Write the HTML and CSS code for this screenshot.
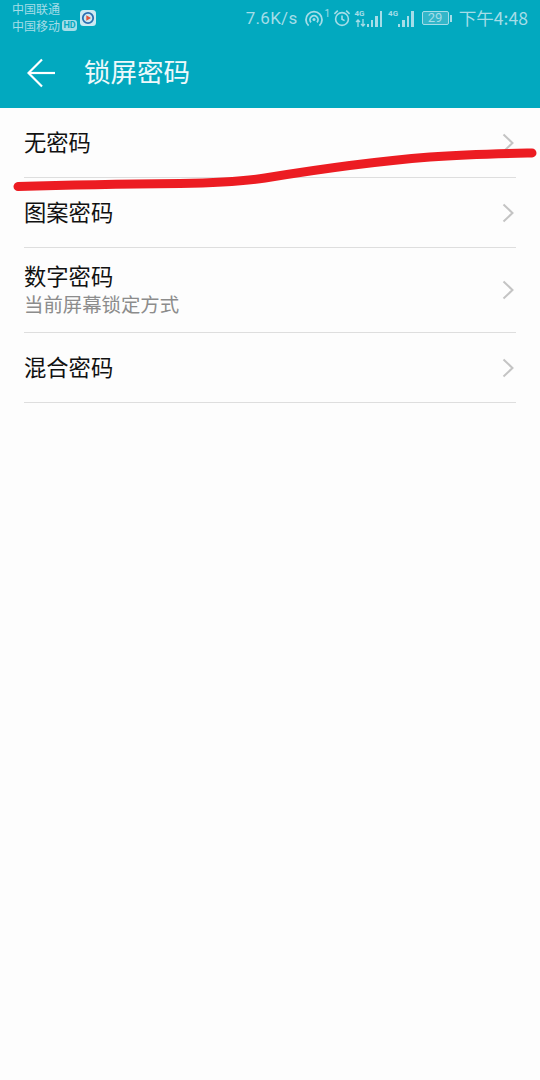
FILE: index.html
```html
<!DOCTYPE html>
<html lang="zh">
<head>
<meta charset="utf-8">
<title>锁屏密码</title>
<link rel="stylesheet" href="styles.css">
</head>
<body>
<div class="screen">
  <header class="header">
    <div class="status">
      <div class="status-left">
        <div class="carriers">
          <span>中国联通</span>
          <span class="carrier-2">中国移动<b class="hd">HD</b></span>
        </div>
        <svg class="app-icon" viewBox="0 0 16 16" width="16" height="16">
          <rect x="0" y="0" width="16" height="16" rx="3.5" fill="#cfeaf2"/>
          <circle cx="8" cy="8" r="5.2" fill="none" stroke="#2b6fb0" stroke-width="1.8"/>
          <path d="M6.3 5.2 11 8l-4.7 2.8z" fill="#e2543c"/>
        </svg>
      </div>
      <div class="status-right">
        <span class="speed">7.6K/s</span>
        <span class="hotspot-wrap">
          <svg viewBox="0 0 18 17" width="18" height="17" fill="none" stroke="#a5dde8" stroke-width="1.8">
            <path d="M3.6 15.600A8 8 0 1 1 14.400 15.600"/>
            <path d="M6 12.400A4 4 0 1 1 12 12.400"/>
            <circle cx="9" cy="9.600" r="1.500" fill="#a5dde8" stroke="none"/>
          </svg>
          <sup class="one">1</sup>
        </span>
        <svg class="alarm" viewBox="0 0 18 18" width="18" height="18" fill="none" stroke="#a5dde8" stroke-width="1.6">
          <circle cx="9" cy="10" r="6.400"/>
          <path d="M9 6.400V10.200L11.600 11.600"/>
          <path d="M1.400 4.800 4.800 1.600M16.600 4.800 13.200 1.600"/>
        </svg>
        <span class="signal">
          <span class="net net-wide"><span>4G</span>
            <svg class="arrows" viewBox="0 0 11 8" width="11" height="8" fill="none" stroke="#a5dde8" stroke-width="1.300">
              <path d="M3 8V1M1 3 3 1 5 3M8 0V7M6 5 8 7 10 5"/>
            </svg>
          </span>
          <span class="bars"><i class="b1"></i><i class="b2"></i><i class="b3"></i><i class="b4"></i></span>
        </span>
        <span class="signal signal-last">
          <span class="net"><span>4G</span></span>
          <span class="bars"><i class="b1"></i><i class="b2"></i><i class="b3"></i><i class="b4"></i></span>
        </span>
        <span class="battery"><span class="battery-body">29</span><span class="battery-cap"></span></span>
        <span class="clock">下午4:48</span>
      </div>
    </div>
    <div class="toolbar">
      <svg class="back" viewBox="0 0 28 30" width="28" height="30" fill="none" stroke="#fff" stroke-width="2.200">
        <path d="M28 15H2"/>
        <path d="M15 1.500 1.500 15 15 28.500"/>
      </svg>
      <h1 class="title">锁屏密码</h1>
    </div>
  </header>

  <main class="list">
    <div class="row">
      <span class="label">无密码</span>
      <svg class="chev" viewBox="0 0 12 20" width="12" height="20"><path d="M1.500 1.500 10.500 10 1.500 18.500"/></svg>
    </div>
    <div class="row">
      <span class="label">图案密码</span>
      <svg class="chev" viewBox="0 0 12 20" width="12" height="20"><path d="M1.500 1.500 10.500 10 1.500 18.500"/></svg>
    </div>
    <div class="row row-tall">
      <span class="stack">
        <span class="label">数字密码</span>
        <span class="sub">当前屏幕锁定方式</span>
      </span>
      <svg class="chev" viewBox="0 0 12 20" width="12" height="20"><path d="M1.500 1.500 10.500 10 1.500 18.500"/></svg>
    </div>
    <div class="row">
      <span class="label">混合密码</span>
      <svg class="chev" viewBox="0 0 12 20" width="12" height="20"><path d="M1.500 1.500 10.500 10 1.500 18.500"/></svg>
    </div>
  </main>

  <svg class="scribble" viewBox="0 0 540 1080" width="540" height="1080">
    <path d="M18 186.500C70 185 130 184 180 183.500C215 183 240 182 265 178C320 169 380 161 430 157C470 154 505 153.500 532 153"/>
  </svg>
</div>
</body>
</html>
```

FILE: styles.css
```css
* { box-sizing: border-box; }
html, body { margin: 0; padding: 0; }
body {
  width: 540px;
  height: 1080px;
  overflow: hidden;
  background: #fdfdfd;
  font-family: "Noto Sans CJK SC", "Roboto", sans-serif;
}
.screen { position: relative; width: 540px; height: 1080px; }

.header { height: 108px; background: #02a9bf; display: flex; flex-direction: column; }
.status {
  height: 38px;
  display: flex;
  justify-content: space-between;
  align-items: flex-start;
  padding: 0 12px 0 12px;
}
.status-left { display: flex; align-items: flex-start; }
.carriers {
  display: flex;
  flex-direction: column;
  font-size: 12px;
  line-height: 16.500px;
  padding-top: 1px;
  color: #a5dde8;
  width: 68px;
}
.carrier-2 { display: flex; align-items: center; }
.hd {
  font: 700 9px/11px "Roboto", sans-serif;
  background: #a5dde8;
  color: #02a9bf;
  border-radius: 3px;
  padding: 0 1.500px;
  margin-left: 2px;
}
.app-icon { margin-top: 10px; }
.status-right { display: flex; align-items: center; height: 36px; color: #a5dde8; }
.speed { font: 17px/20px "Roboto", sans-serif; letter-spacing: 0.3px; margin-right: 7px; }
.hotspot-wrap { display: flex; align-items: flex-start; width: 28px; }
.one { font: 10px/10px "Roboto", sans-serif; margin: -1px 0 0 2px; }
.alarm { margin-right: 4px; }
.signal { display: flex; align-items: flex-end; height: 18px; margin-right: 6px; }
.signal-last { margin-right: 8px; }
.net {
  display: flex;
  flex-direction: column;
  align-self: flex-start;
  width: 10px;
  font: 700 8px/9px "Roboto", sans-serif;
}
.net-wide { width: 12px; }
.arrows { display: block; margin-top: 1px; }
.bars { display: flex; align-items: flex-end; gap: 2px; height: 16px; }
.bars i { display: block; width: 2.400px; background: #a5dde8; }
.b1 { height: 3px; }
.b2 { height: 7px; }
.b3 { height: 11px; }
.b4 { height: 16px; }
.battery { display: flex; align-items: center; margin-right: 7px; }
.battery-body {
  width: 27px;
  height: 14px;
  border: 1px solid #a5dde8;
  border-radius: 2px;
  background: #33b6c9;
  font: 13px/12px "Roboto", sans-serif;
  text-align: center;
}
.battery-cap { width: 2px; height: 7px; margin-left: 1px; background: #a5dde8; }
.clock { font-size: 17.600px; line-height: 20px; }

.toolbar { flex: 1; display: flex; align-items: center; padding: 0 0 1px 27px; }
.back { display: block; }
.title {
  margin: 0 0 3px 29px;
  font-size: 26.500px;
  line-height: 34px;
  font-weight: 400;
  color: #eef9fb;
}

.list { padding: 0 24px; }
.row {
  display: flex;
  justify-content: space-between;
  align-items: center;
  height: 70px;
  border-bottom: 1px solid #dedede;
  padding-right: 2px;
}
.row-tall { height: 85px; }
.row > .label { margin-bottom: 2px; }
.stack { display: flex; flex-direction: column; margin-bottom: 3px; }
.label { font-size: 22.300px; line-height: 29px; color: #111; }
.sub { font-size: 19.400px; line-height: 24px; margin-top: 2px; color: #8c8c8c; }
.chev { display: block; }
.chev path { fill: none; stroke: #c4c4c4; stroke-width: 2; }

.scribble { position: absolute; left: 0; top: 0; pointer-events: none; }
.scribble path { fill: none; stroke: #ec1c22; stroke-width: 9; stroke-linecap: round; }
```
